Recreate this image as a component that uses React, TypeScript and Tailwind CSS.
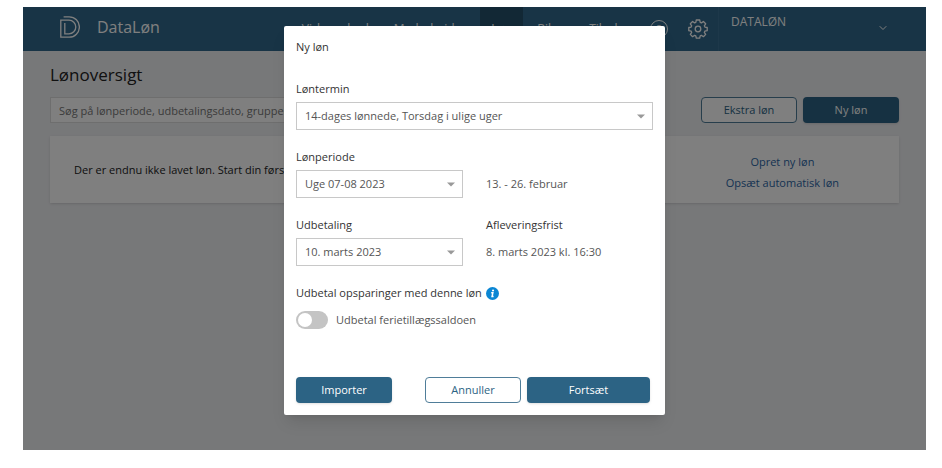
import { ChevronDown } from "lucide-react";
import { useState } from "react";
import type { ReactNode } from "react";

const navItems = [
  { label: "Virksomhed", active: false },
  { label: "Medarbejder", active: false },
  { label: "Løn", active: true },
  { label: "Bilag", active: false },
  { label: "Tilvalg", active: false },
];

function Logo() {
  return (
    <svg width="20" height="22" viewBox="0 0 20 22" fill="none" stroke="currentColor" strokeWidth="1.3">
      <path d="M3.6 .8H9.2a10.2 10.2 0 0 1 0 20.4H.8V4.2H9a6.8 6.8 0 0 1 0 13.6H4.8V7" />
    </svg>
  );
}

function GearIcon() {
  return (
    <svg width="20" height="20" viewBox="0 0 20 20" fill="none" stroke="currentColor" strokeWidth="1.3" strokeLinejoin="round">
      <path d="M8.3 1h3.4l.5 2.4 1.2.5 2-1.4 2.3 2.3-1.4 2 .6 1.3 2.3.4v3.2l-2.3.4-.6 1.3 1.4 2-2.3 2.3-2-1.4-1.2.5-.5 2.4H8.3l-.5-2.4-1.2-.5-2 1.4-2.3-2.3 1.4-2-.6-1.3-2.3-.4V8.5l2.3-.4.6-1.3-1.4-2 2.3-2.3 2 1.4 1.2-.5z" />
      <circle cx="10" cy="10" r="2.8" />
    </svg>
  );
}

interface SelectFieldProps {
  id: string;
  options: string[];
}

function SelectField({ id, options }: SelectFieldProps) {
  return (
    <div className="relative">
      <select
        id={id}
        className="block h-7 w-full appearance-none border border-[#c8c8c8] bg-white pl-2 pr-7 text-[11px] text-[#555555] focus:outline-none focus:border-[#2c6384]"
      >
        {options.map((option) => (
          <option key={option}>{option}</option>
        ))}
      </select>
      <svg className="pointer-events-none absolute right-2 top-3" width="8" height="5" viewBox="0 0 8 5">
        <path d="M0 .5h8L4 4.5z" fill="#999999" />
      </svg>
    </div>
  );
}

interface ButtonProps {
  children: ReactNode;
  className?: string;
  outline?: boolean;
  onClick?: () => void;
}

function Button({ children, className = "", outline = false, onClick }: ButtonProps) {
  const look = outline
    ? "border border-[#4f7d99] bg-white text-[#2c6384]"
    : "bg-[#2c6384] text-white font-medium shadow-sm";
  return (
    <button type="button" onClick={onClick} className={`h-[26px] rounded text-[11px] ${look} ${className}`}>
      {children}
    </button>
  );
}

function Header() {
  return (
    <header className="flex h-11 bg-[#31698c] text-white">
      <a href="#" className="flex items-center gap-[17px] pb-1 pl-[37px] text-base">
        <Logo />
        DataLøn
      </a>
      <nav className="ml-auto flex gap-[3px] pr-[5px] text-xs">
        {navItems.map((item) => (
          <a
            key={item.label}
            href="#"
            className={`flex items-center px-[11px] ${item.active ? "bg-[#24506b]" : ""}`}
          >
            {item.label}
          </a>
        ))}
      </nav>
      <div className="flex items-center gap-5 px-[10px]">
        <button type="button" aria-label="Hjælp" className="size-[18px] rounded-full border text-[11px]">
          ?
        </button>
        <button type="button" aria-label="Indstillinger">
          <GearIcon />
        </button>
      </div>
      <button type="button" className="flex w-[208px] justify-between border-l border-[#3a7194] pl-3 pr-[37px] pt-[7px] text-xs font-medium">
        DATALØN
        <ChevronDown size={12} strokeWidth={2} className="mt-2" />
      </button>
    </header>
  );
}

function Overview() {
  return (
    <main className="px-[27px] pt-3">
      <h1 className="text-[17px] leading-6">Lønoversigt</h1>
      <div className="mt-[10px] flex gap-[6px]">
        <input
          type="text"
          aria-label="Søg"
          placeholder="Søg på lønperiode, udbetalingsdato, gruppenavn"
          className="h-[26px] min-w-0 flex-1 border border-[#dddddd] bg-white px-2 text-[11px] placeholder:text-[#777777]"
        />
        <Button outline className="ml-12 w-24">Ekstra løn</Button>
        <Button className="w-24">Ny løn</Button>
      </div>
      <section className="mt-[13px] flex h-[67px] items-center bg-white pl-6 pr-[60px] text-[11px] leading-4 shadow-sm">
        <p className="flex-1">Der er endnu ikke lavet løn. Start din første løn her.</p>
        <div className="flex flex-col items-center gap-[5px] pt-[6px] text-[#2b66a5]">
          <a href="#">Opret ny løn</a>
          <a href="#">Opsæt automatisk løn</a>
        </div>
      </section>
    </main>
  );
}

function NewPayrollDialog({ onClose }: { onClose: () => void }) {
  const [payOut, setPayOut] = useState(false);

  return (
    <div
      role="dialog"
      aria-labelledby="dialog-title"
      className="w-full max-w-[381px] rounded-xs bg-white px-3 pb-3 pt-[11px] text-[11px] text-[#333333] shadow-lg"
    >
      <h2 id="dialog-title" className="font-medium leading-5">Ny løn</h2>

      {/* Term */}
      <div className="mt-[22px]">
        <label htmlFor="term" className="mb-[3px] block font-medium leading-5">Løntermin</label>
        <SelectField id="term" options={["14-dages lønnede, Torsdag i ulige uger"]} />
      </div>

      {/* Period and payout date */}
      <div className="mt-[17px] grid grid-cols-[167px_1fr] gap-x-[23px] gap-y-[17px]">
        <div>
          <label htmlFor="period" className="mb-[3px] block font-medium leading-5">Lønperiode</label>
          <SelectField id="period" options={["Uge 07-08 2023"]} />
        </div>
        <p className="self-end leading-7 text-[#555555]">13. - 26. februar</p>
        <div>
          <label htmlFor="payout" className="mb-[3px] block font-medium leading-5">Udbetaling</label>
          <SelectField id="payout" options={["10. marts 2023"]} />
        </div>
        <div>
          <h3 className="mb-[3px] font-medium leading-5">Afleveringsfrist</h3>
          <p className="leading-7 text-[#555555]">8. marts 2023 kl. 16:30</p>
        </div>
      </div>

      {/* Savings */}
      <h3 className="mt-[17px] flex items-center gap-1 font-medium leading-5">
        Udbetal opsparinger med denne løn
        <svg width="13" height="13" viewBox="0 0 12 12">
          <circle cx="6" cy="6" r="6" fill="#0a86d4" />
          <circle cx="6.5" cy="3.2" r="1" fill="#fff" />
          <path d="M4.8 5.4h1.5L5.6 8.8H7" fill="none" stroke="#fff" strokeWidth="1.4" />
        </svg>
      </h3>
      <label className="mt-[7px] flex items-center gap-2 leading-5 text-[#555555]">
        <input
          type="checkbox"
          role="switch"
          checked={payOut}
          onChange={(e) => setPayOut(e.target.checked)}
          className="h-[18px] w-8 appearance-none rounded-full bg-[#c4c4c4] p-[2px] before:block before:size-[14px] before:rounded-full before:bg-white checked:bg-[#2c6384] checked:before:ml-auto"
        />
        Udbetal ferietillægssaldoen
      </label>

      <div className="mt-[47px] flex gap-[6px] pr-[3px]">
        <Button className="w-24">Importer</Button>
        <Button outline className="ml-auto w-24" onClick={onClose}>Annuller</Button>
        <Button className="w-[123px]">Fortsæt</Button>
      </div>
    </div>
  );
}

export default function App() {
  const [isOpen, setIsOpen] = useState(true);

  return (
    <div className="flex min-h-screen bg-white pb-[18px] pl-[23px] pr-4 pt-[7px] font-['Open_Sans','Noto_Sans',sans-serif]">
      <div className="relative flex-1 bg-[#eff0f3] text-[#222222]">
        <Header />
        <Overview />
        {isOpen && (
          <div className="absolute inset-0 flex items-start justify-center bg-black/50 pt-[19px]">
            <NewPayrollDialog onClose={() => setIsOpen(false)} />
          </div>
        )}
      </div>
    </div>
  );
}
